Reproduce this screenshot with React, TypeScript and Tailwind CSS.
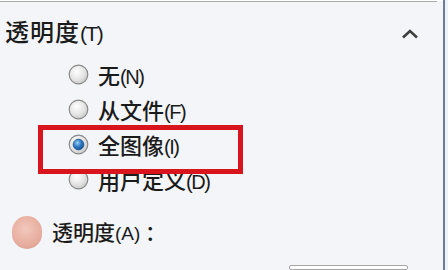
import React from 'react';

const cjk = { fontFamily: '"Noto Sans CJK SC", "Noto Sans", sans-serif' };
const latin = { fontFamily: '"Liberation Sans", Arial, sans-serif' };

const Radio: React.FC<{ checked?: boolean }> = ({ checked }) => (
  <svg width="21" height="21" viewBox="0 0 21 21" className="shrink-0">
    <defs>
      <radialGradient id="rg" cx="40%" cy="35%" r="70%">
        <stop offset="0%" stopColor="#ffffff" />
        <stop offset="65%" stopColor="#e2e2e2" />
        <stop offset="100%" stopColor="#c4c4c4" />
      </radialGradient>
      <radialGradient id="bd" cx="40%" cy="35%" r="70%">
        <stop offset="0%" stopColor="#9fd0f5" />
        <stop offset="50%" stopColor="#2f7cc4" />
        <stop offset="100%" stopColor="#124f8f" />
      </radialGradient>
    </defs>
    <circle cx="10.5" cy="10.5" r="9.3" fill="url(#rg)" stroke="#8a8a8a" strokeWidth="1.2" />
    {checked && <circle cx="10.5" cy="10.5" r="5.4" fill="url(#bd)" stroke="#1a4f86" strokeWidth="0.7" />}
  </svg>
);

const Option: React.FC<{ label: string; key2: string; checked?: boolean }> = ({ label, key2, checked }) => (
  <div className="h-[35px] flex items-center gap-[9px]">
    <Radio checked={checked} />
    <span className="text-[22px] leading-none text-[#1b1b1b] font-medium" style={cjk}>
      {label}
      <span className="text-[20px] tracking-[-1.5px]" style={latin}>({key2})</span>
    </span>
  </div>
);

export default function App() {
  return (
    <div className="w-[448px] h-[270px] overflow-hidden flex bg-[#f3f5f8] relative select-none">
      <div className="w-[443px] flex flex-col">
        <div className="h-[5px] bg-white" />
        <div className="h-[2px] w-[437px] bg-[#a9a9a9]" />

        <div className="mt-[18px] h-[30px] flex items-center justify-between pl-[5px] pr-[24px]">
          <span className="text-[24px] leading-none text-[#1b1b1b] font-medium tracking-[1px]" style={cjk}>
            透明度<span className="text-[21px] tracking-[-1.5px]" style={latin}>(T)</span>
          </span>
          <svg width="18" height="10" viewBox="0 0 18 10" className="mt-[4px]">
            <polyline points="2,8.5 9,2 16,8.5" fill="none" stroke="#3f3f3f" strokeWidth="2.6" />
          </svg>
        </div>

        <div className="mt-[13px] pl-[68px] flex flex-col">
          <Option label="无" key2="N" />
          <Option label="从文件" key2="F" />
          <Option label="全图像" key2="I" checked />
          <Option label="用户定义" key2="D" />
        </div>

        <div className="mt-[19px] h-[32px] flex items-center pl-[12px] gap-[10px]">
          <div className="w-[30px] h-[33px] rounded-full bg-[radial-gradient(circle_at_45%_40%,#f2c8bc,#e6ab9c_65%,#cf9686)]" />
          <span className="text-[21px] leading-none text-[#1b1b1b] font-medium" style={cjk}>
            透明度<span className="text-[19px]" style={latin}>(A)</span> ：
          </span>
        </div>

        <div className="mt-[17px] ml-[289px] w-[119px] h-[20px] bg-white border border-[#a6a6a6] rounded-[2px]" />
      </div>
      <div className="w-[2px] bg-[#6f7c96]" />
      <div className="w-[3px] bg-[#eef1f6]" />

      <div className="absolute left-[38px] top-[125px] w-[205px] h-[49px] border-[5px] border-[#d8141c]" />
    </div>
  );
}
